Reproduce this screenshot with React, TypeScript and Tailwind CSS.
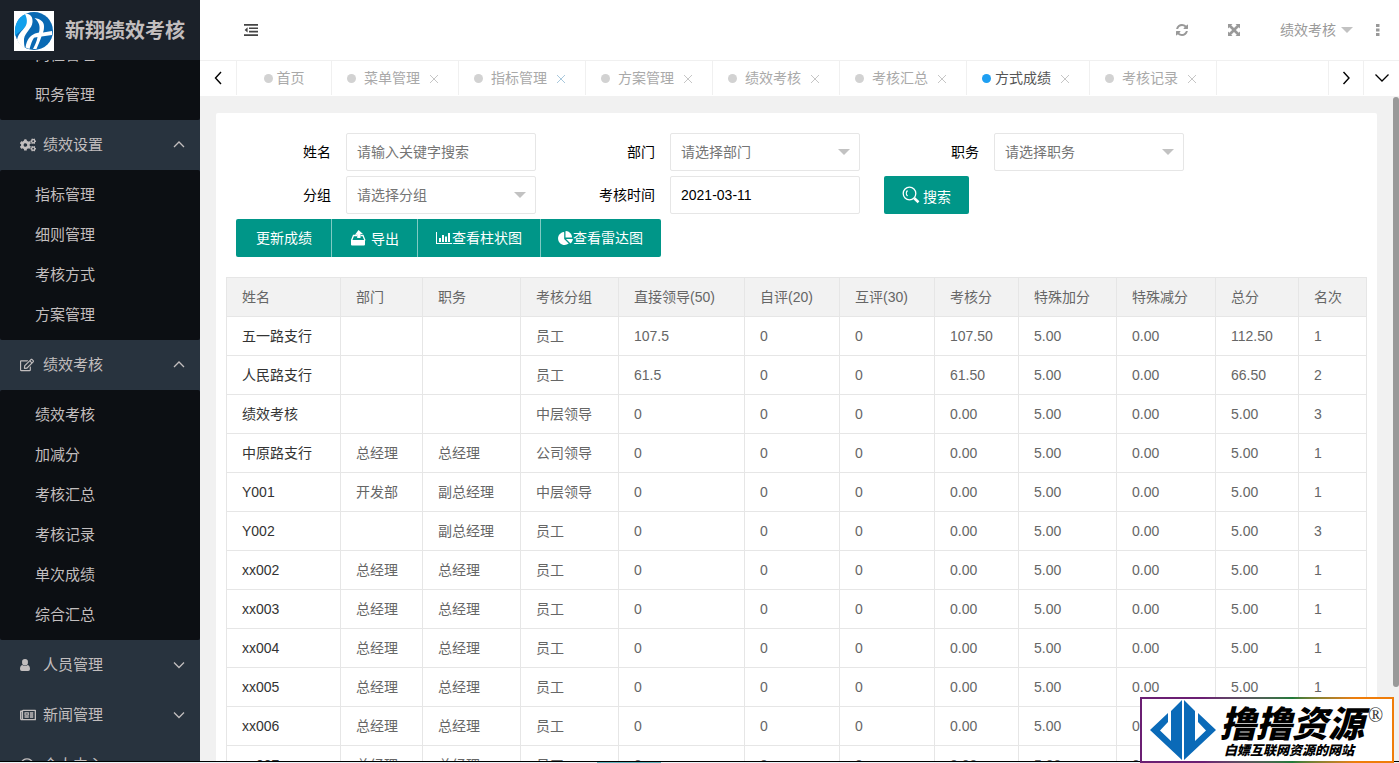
import type { ReactNode } from 'react';
import {
  FaCogs,
  FaRegEdit,
  FaRegNewspaper,
  FaRegQuestionCircle,
  FaChartPie,
} from 'react-icons/fa';

function Chevron({ d, className, strokeWidth = 1 }: { d: string; className: string; strokeWidth?: number }) {
  return (
    <svg
      viewBox="0 0 16 16"
      className={className}
      fill="none"
      stroke="currentColor"
      strokeWidth={strokeWidth}
      aria-hidden="true"
    >
      <path d={d} />
    </svg>
  );
}

const UP = 'M3 10 8 5l5 5';
const DOWN = 'M3 5.5l5 5 5-5';
const LEFT = 'M11 2 5.500 8 11 14';
const RIGHT = 'M5.500 2 11 8l-5.500 6';

function Logo() {
  return (
    <svg viewBox="0 0 40 40" className="size-10 bg-white" aria-hidden="true">
      <circle cx="20" cy="20" r="19" fill="#0969b3" />
      <path d="M1 25C0 13 4 6 12 3c2 4 2 9-1 13-3 4-7 5-10 9z" fill="#12a0ec" />
      <path d="M11 3c5-1 8 3 7.500 8C18 18 11 21 10 28c0 4 0 6 1 9-3-1-6-4-8-8 1-6 5-9 8-13 3-4 2-9 0-13z" fill="#fff" />
      <path d="M20.500 7C27 8 30 11 30 15c0 2 0 4-1 6.500l9-1.500v4l-10.500 1.500C26 30 24 34 22.500 38H19c2-4 4-8 4.500-12l-3.500.800c-2 3-3 6-4.500 11.200l-4-1.500C13 28 16 25 21 22.500l4-1C26.500 15 25 11 20.500 7z" fill="#fff" />
    </svg>
  );
}

type Group = { title: string; icon: ReactNode; children?: string[] };

const groups: Group[] = [
  {
    title: '绩效设置',
    icon: <FaCogs className="size-4" />,
    children: ['指标管理', '细则管理', '考核方式', '方案管理'],
  },
  {
    title: '绩效考核',
    icon: <FaRegEdit className="size-3.5" />,
    children: ['绩效考核', '加减分', '考核汇总', '考核记录', '单次成绩', '综合汇总'],
  },
  {
    title: '人员管理',
    icon: (
      <svg viewBox="0 0 10 12" className="h-3 w-2.5" fill="currentColor" aria-hidden="true">
        <path d="M5 0a2.900 2.900 0 0 1 2.900 3.200A3 3 0 0 1 5 6.500a3 3 0 0 1-2.900-3.300A2.900 2.900 0 0 1 5 0zM2.300 5.900C3.800 7.400 6.200 7.400 7.700 5.900 9.400 6.200 10 8 10 10q0 2-1.800 2H1.800Q0 12 0 10c0-2 .6-3.800 2.300-4.100z" />
      </svg>
    ),
  },
  { title: '新闻管理', icon: <FaRegNewspaper className="size-4" /> },
  { title: '个人中心', icon: <FaRegQuestionCircle className="size-3.5" /> },
];

function SubMenu({ items }: { items: string[] }) {
  return (
    <ul className="rounded-xs bg-[#0c0f13] py-[5px]">
      {items.map((item) => (
        <li key={item}>
          <a href="#" className="block h-10 pl-[35px] leading-10">
            {item}
          </a>
        </li>
      ))}
    </ul>
  );
}

function Sidebar() {
  return (
    <aside className="flex w-[200px] shrink-0 flex-col bg-[#28333e] text-[15px] text-[#c2bebe]">
      <div className="z-10 flex h-[60px] shrink-0 items-center gap-[11px] bg-[#1b2129] pt-0.5 pl-3.5">
        <Logo />
        <span className="text-xl font-bold whitespace-nowrap">新翔绩效考核</span>
      </div>
      <nav className="min-h-0 flex-1 overflow-hidden">
        <div className="-mt-[30px]">
          <SubMenu items={['岗位管理', '职务管理']} />
          {groups.map((g) => (
            <div key={g.title}>
              <button type="button" className="flex h-[50px] w-full items-center pr-[13px] pl-5 text-left">
                <span className="w-[23px]">{g.icon}</span>
                <span className="flex-1">{g.title}</span>
                <Chevron d={g.children ? UP : DOWN} className="size-4" strokeWidth={1.3} />
              </button>
              {g.children && <SubMenu items={g.children} />}
            </div>
          ))}
        </div>
      </nav>
    </aside>
  );
}

function Caret({ className = '' }: { className?: string }) {
  return (
    <svg viewBox="0 0 12 6" className={`h-1.5 w-3 fill-[#c2c2c2] ${className}`} aria-hidden="true">
      <path d="M0 0h12L6 6z" />
    </svg>
  );
}

function Topbar() {
  return (
    <header className="flex h-[60px] shrink-0 items-center bg-white pr-[19px] pl-11 text-[#999]">
      <button type="button" aria-label="收起菜单" className="text-[#444]">
        <svg viewBox="0 0 14 12" className="h-3 w-3.5" fill="currentColor" aria-hidden="true">
          <path d="M0 0h14v1.700H0zM5 3.400h9v1.700H5zM5 6.800h9v1.700H5zM0 10.200h14V12H0zM3.600 3.300v5.300L.6 6z" />
        </svg>
      </button>
      <div className="ml-auto flex items-center">
        <button type="button" aria-label="刷新" className="mr-10">
          <svg viewBox="0 0 1536 1536" className="size-3" fill="currentColor" aria-hidden="true">
            <path d="M1511 928q0 5-1 7-64 268-268 434.500T764 1536q-146 0-282.500-55T238 1324l-129 129q-19 19-45 19t-45-19-19-45V960q0-26 19-45t45-19h448q26 0 45 19t19 45-19 45l-137 137q71 66 161 102t187 36q134 0 250-65t186-179q11-17 53-117 8-23 30-23h192q13 0 22.500 9.500t9.500 22.500zm25-800v448q0 26-19 45t-45 19h-448q-26 0-45-19t-19-45 19-45l138-138Q969 256 768 256q-134 0-250 65T332 500q-11 17-53 117-8 23-30 23H50q-13 0-22.500-9.500T18 608v-7q65-268 270-434.500T768 0q146 0 284 55.500T1297 212l130-129q19-19 45-19t45 19 19 45z" />
          </svg>
        </button>
        <button type="button" aria-label="全屏" className="mr-10">
          <svg viewBox="0 0 12 12" className="size-3" fill="currentColor" aria-hidden="true">
            <path d="M0 0h4.500L3.200 1.300 6 4.100l2.800-2.800L7.500 0H12v4.500l-1.300-1.300L7.900 6l2.800 2.800L12 7.500V12H7.500l1.300-1.300L6 7.900l-2.800 2.800L4.500 12H0V7.500l1.300 1.300L4.100 6 1.300 3.200 0 4.500z" />
          </svg>
        </button>
        <button type="button" className="flex items-center gap-[5px] text-sm">
          绩效考核
          <Caret />
        </button>
        <button type="button" aria-label="更多" className="ml-[23px]">
          <svg viewBox="0 0 4 12" className="h-3 w-1" fill="currentColor" aria-hidden="true">
            <path d="M0 0h3.500v3H0zM0 4.500h3.500v3H0zM0 9h3.500v3H0z" />
          </svg>
        </button>
      </div>
    </header>
  );
}

const tabs = ['菜单管理', '指标管理', '方案管理', '绩效考核', '考核汇总', '方式成绩', '考核记录'];

function Tabs() {
  return (
    <div className="flex h-9 shrink-0 border-t border-[#f0f0f0] bg-white pb-px text-sm text-[#a9a9a9]">
      <button
        type="button"
        aria-label="向左"
        className="flex w-[37px] items-center justify-center border-r border-[#f0f0f0] text-black"
      >
        <Chevron d={LEFT} className="size-4" strokeWidth={1.4} />
      </button>
      <button
        type="button"
        className="flex w-[95px] items-center justify-center gap-1 border-r border-[#f0f0f0]"
      >
        <span className="size-[9px] rounded-full bg-[#d2d2d2]" />
        首页
      </button>
      {tabs.map((t) => {
        const active = t === '方式成绩';
        return (
          <div
            key={t}
            className={`flex items-center border-r border-[#f0f0f0] pl-[15px] ${active ? 'w-[123px] gap-1 text-[#555]' : 'w-[127px] gap-2'}`}
          >
            <span className={`size-[9px] rounded-full ${active ? 'bg-[#1e9ff2]' : 'bg-[#d2d2d2]'}`} />
            <button type="button">{t}</button>
            <button
              type="button"
              aria-label={`关闭${t}`}
              className={`pt-0.5 ${active ? 'ml-1.5' : 'ml-0.5'} ${t === '指标管理' ? 'text-[#a9c8dc]' : 'text-[#c6c6c6]'}`}
            >
              <svg viewBox="0 0 8 8" className="size-2" fill="none" stroke="currentColor" aria-hidden="true">
                <path d="M0 0l8 8M8 0 0 8" />
              </svg>
            </button>
          </div>
        );
      })}
      <div className="ml-auto flex text-black">
        <button
          type="button"
          aria-label="向右"
          className="flex w-[35px] items-center justify-center border-l border-[#f0f0f0]"
        >
          <Chevron d={RIGHT} className="size-4" strokeWidth={1.4} />
        </button>
        <button
          type="button"
          aria-label="更多标签"
          className="flex w-9 items-center justify-center border-l border-[#f0f0f0]"
        >
          <Chevron d="M1.500 4.500 8 11 14.500 4.500" className="size-4" strokeWidth={1.3} />
        </button>
      </div>
    </div>
  );
}

function Field({ id, label, children }: { id: string; label: string; children: ReactNode }) {
  return (
    <div className="flex w-[324px] items-center">
      <label htmlFor={id} className="w-[110px] pr-[15px] text-right">
        {label}
      </label>
      {children}
    </div>
  );
}

const box = 'h-[38px] w-[190px] rounded-xs border border-[#e6e6e6] bg-white px-2.5';

function SelectField({ id, label, placeholder }: { id: string; label: string; placeholder: string }) {
  return (
    <Field id={id} label={label}>
      <div className="relative">
        <select id={id} className={`${box} appearance-none text-[#757575]`}>
          <option>{placeholder}</option>
        </select>
        <Caret className="pointer-events-none absolute top-4 right-2.5" />
      </div>
    </Field>
  );
}

function Filters() {
  return (
    <form className="flex flex-wrap gap-y-[5px] text-sm text-black">
      <Field id="name" label="姓名">
        <input id="name" placeholder="请输入关键字搜索" className={`${box} placeholder:text-[#757575]`} />
      </Field>
      <SelectField id="dept" label="部门" placeholder="请选择部门" />
      <SelectField id="post" label="职务" placeholder="请选择职务" />
      <SelectField id="group" label="分组" placeholder="请选择分组" />
      <Field id="date" label="考核时间">
        <input id="date" defaultValue="2021-03-11" className={box} />
      </Field>
      <button
        type="button"
        className="flex h-[38px] items-center gap-[3px] rounded-xs bg-[#009688] px-[18px] text-white"
      >
        <svg
          viewBox="0 0 18 18"
          className="size-[18px]"
          fill="none"
          stroke="currentColor"
          strokeWidth="1.300"
          aria-hidden="true"
        >
          <circle cx="7.500" cy="7.500" r="6.300" />
          <path d="M5.500 4.500c-1.500 1.500-1.500 4 0 5.500" />
          <path d="M12.300 12.300l4.200 4" strokeWidth="2.600" />
        </svg>
        <span className="pt-1">搜索</span>
      </button>
    </form>
  );
}

function Actions() {
  const base = 'flex h-[38px] items-center bg-[#009688]';
  return (
    <div className="mt-[5px] ml-2.5 flex text-sm text-white">
      <button type="button" className={`${base} rounded-l-xs pr-[19px] pl-5`}>
        更新成绩
      </button>
      <button type="button" className={`${base} gap-[5px] border-l border-[#80cac3] px-[18px]`}>
        <svg viewBox="0 0 16 16" className="size-4" fill="currentColor" aria-hidden="true">
          <path d="M1 10h14v4.500q0 1-1 1H2q-1 0-1-1zM8.500 0 13 4h-2.500v4H7.200V4.800H5z" />
          <path d="M7 5.500H3.500L1.500 10.500M10.500 5.500h2.500l2 5" fill="none" stroke="currentColor" strokeWidth="1.300" />
        </svg>
        <span className="pt-0.5">导出</span>
      </button>
      <button type="button" className={`${base} border-l border-[#80cac3] px-[18px]`}>
        <svg viewBox="0 0 16 14" className="h-3.5 w-4" fill="currentColor" aria-hidden="true">
          <path d="M0 1h1v11h15v1H0zM3 7h2v4H3zM6 4h2v7H6zM9 5.500h2V11H9zM12 2h2v9h-2z" />
        </svg>
        查看柱状图
      </button>
      <button type="button" className={`${base} rounded-r-xs border-l border-[#80cac3] pr-[18px] pl-[17px]`}>
        <FaChartPie className="h-3.5 w-[15px]" />
        查看雷达图
      </button>
    </div>
  );
}

const columns = [
  { title: '姓名', width: 'w-[114px]' },
  { title: '部门', width: 'w-[82px]' },
  { title: '职务', width: 'w-[98px]' },
  { title: '考核分组', width: 'w-[98px]' },
  { title: '直接领导(50)', width: 'w-[126px]' },
  { title: '自评(20)', width: 'w-[95px]' },
  { title: '互评(30)', width: 'w-[95px]' },
  { title: '考核分', width: 'w-[84px]' },
  { title: '特殊加分', width: 'w-[98px]' },
  { title: '特殊减分', width: 'w-[99px]' },
  { title: '总分', width: 'w-[83px]' },
  { title: '名次', width: 'w-[68px]' },
];

const rows = [
  ['五一路支行', '', '', '员工', '107.5', '0', '0', '107.50', '5.00', '0.00', '112.50', '1'],
  ['人民路支行', '', '', '员工', '61.5', '0', '0', '61.50', '5.00', '0.00', '66.50', '2'],
  ['绩效考核', '', '', '中层领导', '0', '0', '0', '0.00', '5.00', '0.00', '5.00', '3'],
  ['中原路支行', '总经理', '总经理', '公司领导', '0', '0', '0', '0.00', '5.00', '0.00', '5.00', '1'],
  ['Y001', '开发部', '副总经理', '中层领导', '0', '0', '0', '0.00', '5.00', '0.00', '5.00', '1'],
  ['Y002', '', '副总经理', '员工', '0', '0', '0', '0.00', '5.00', '0.00', '5.00', '3'],
  ...['xx002', 'xx003', 'xx004', 'xx005', 'xx006', 'xx007'].map((n) => [
    n, '总经理', '总经理', '员工', '0', '0', '0', '0.00', '5.00', '0.00', '5.00', '1',
  ]),
];

function Scores() {
  return (
    <table className="mt-5 w-full table-fixed border-collapse text-sm text-[#666]">
      <thead className="bg-[#f2f2f2]">
        <tr>
          {columns.map((c) => (
            <th
              key={c.title}
              className={`${c.width} h-[39px] border border-[#e6e6e6] px-[15px] text-left font-normal whitespace-nowrap`}
            >
              {c.title}
            </th>
          ))}
        </tr>
      </thead>
      <tbody>
        {rows.map((r) => (
          <tr key={r[0]}>
            {r.map((v, i) => (
              <td
                key={i}
                className="h-[39px] border border-[#e6e6e6] px-[15px] whitespace-nowrap first:text-[#333]"
              >
                {v}
              </td>
            ))}
          </tr>
        ))}
      </tbody>
    </table>
  );
}

function Watermark() {
  return (
    <div className="fixed right-[5px] bottom-0 bg-linear-to-r from-[#6b1f73] from-25% via-[#1f7a3a] via-60% to-[#ef7d0a] to-85% p-0.5">
      <div className="flex h-[62px] w-[250px] items-center bg-white pl-2">
        <svg viewBox="0 0 66 62" className="h-[62px] w-[66px] shrink-0" fill="#0a6ab8" aria-hidden="true">
          <path d="M32 1v60L0 31l18-17v9l-8 8.500L21 42V12zM34 1l11 11v30l11-10.500-8-8.500v-9l18 17-32 30z" />
        </svg>
        <div className="ml-1 pt-1.5 text-black">
          <div className="flex items-start gap-1">
            <span className="text-[36px] leading-9 font-black italic">撸撸资源</span>
            <span className="font-['Liberation_Serif',serif] text-xl leading-4 text-[#333]">®</span>
          </div>
          <div className="pl-1 text-[13px] leading-4 font-black italic">白嫖互联网资源的网站</div>
        </div>
      </div>
    </div>
  );
}

export default function App() {
  return (
    <div className="flex h-screen overflow-hidden bg-[#f1f1f1] font-['Liberation_Sans','Noto_Sans_CJK_SC',sans-serif]">
      <Sidebar />
      <div className="flex min-w-0 flex-1 flex-col">
        <Topbar />
        <Tabs />
        <main className="relative min-h-0 flex-1 overflow-hidden pt-[17px] pr-[22px] pl-4">
          <section className="rounded-xs bg-white px-2.5 pt-5 pb-10">
            <div className="pl-2.5">
              <Filters />
            </div>
            <Actions />
            <Scores />
          </section>
          <div className="absolute top-px right-0 h-[590px] w-1.5 rounded-full bg-[#999]" />
        </main>
      </div>
      <div className="fixed inset-x-0 bottom-0 flex h-0.5 border-t border-black bg-[#e8f4f8] pl-[597px]">
        <span className="w-16 bg-[#5fb3bd]" />
      </div>
      <Watermark />
    </div>
  );
}
